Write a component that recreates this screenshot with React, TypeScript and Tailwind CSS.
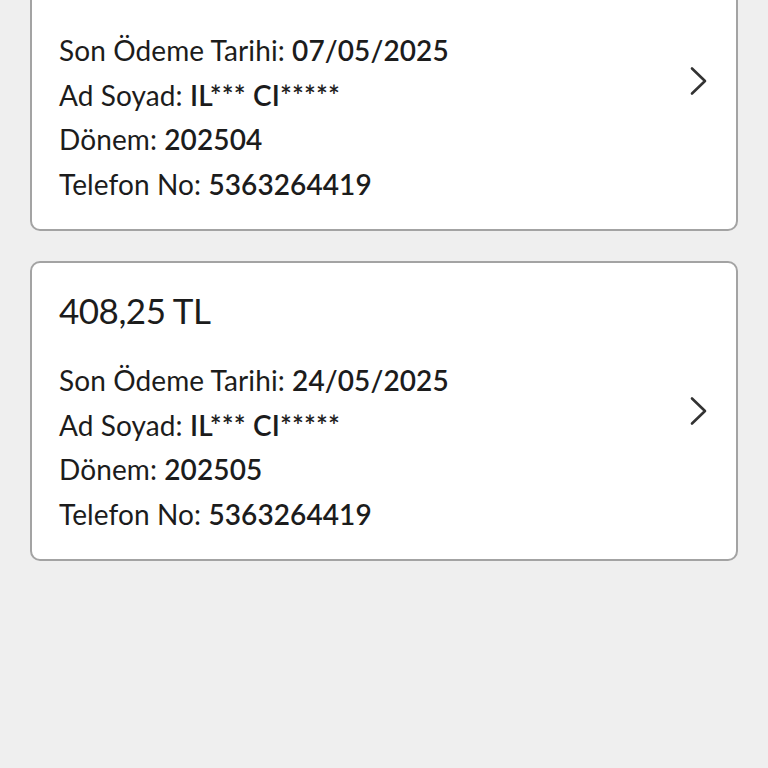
import React from 'react';

type Bill = {
  amount: string;
  dueDate: string;
  name: [string, string];
  period: string;
  phone: string;
};

const bills: Bill[] = [
  { amount: '412,60 TL', dueDate: '07/05/2025', name: ['IL***', 'CI*****'], period: '202504', phone: '5363264419' },
  { amount: '408,25 TL', dueDate: '24/05/2025', name: ['IL***', 'CI*****'], period: '202505', phone: '5363264419' },
];

function Chevron() {
  return (
    <svg width="20" height="30" viewBox="0 0 20 30" fill="none" className="shrink-0">
      <path d="M3 2.5 L16 15 L3 27.5" stroke="#333333" strokeWidth="2.6" strokeLinecap="round" strokeLinejoin="round" />
    </svg>
  );
}

function BillCard({ bill }: { bill: Bill }) {
  return (
    <div className="flex items-center rounded-[10px] border-2 border-[#a3a3a3] bg-white pl-[27px] pr-[27px]">
      <div className="flex-1 pt-[26px] pb-[23px] text-[#1c1c1c]">
        <div className="h-[42px] text-[35px] leading-[42px] tracking-[-0.5px]">{bill.amount}</div>
        <div className="mt-[27px] text-[28px] leading-[44.5px] tracking-[0.1px]">
          <div>
            Son Ödeme Tarihi: <span className="font-semibold">{bill.dueDate}</span>
          </div>
          <div>
            Ad Soyad: <span className="font-semibold">{bill.name[0]}</span> <span className="font-semibold">{bill.name[1]}</span>
          </div>
          <div>
            Dönem: <span className="font-semibold">{bill.period}</span>
          </div>
          <div>
            Telefon No: <span className="font-semibold">{bill.phone}</span>
          </div>
        </div>
      </div>
      <Chevron />
    </div>
  );
}

export default function App() {
  return (
    <div className="h-[768px] overflow-hidden bg-[#efefef] font-['Lato','Liberation_Sans',sans-serif]">
      <div className="-mt-[69px] flex flex-col gap-[30px] pl-[30px] pr-[30px]">
        {bills.map((b, i) => (
          <BillCard key={i} bill={b} />
        ))}
      </div>
    </div>
  );
}
